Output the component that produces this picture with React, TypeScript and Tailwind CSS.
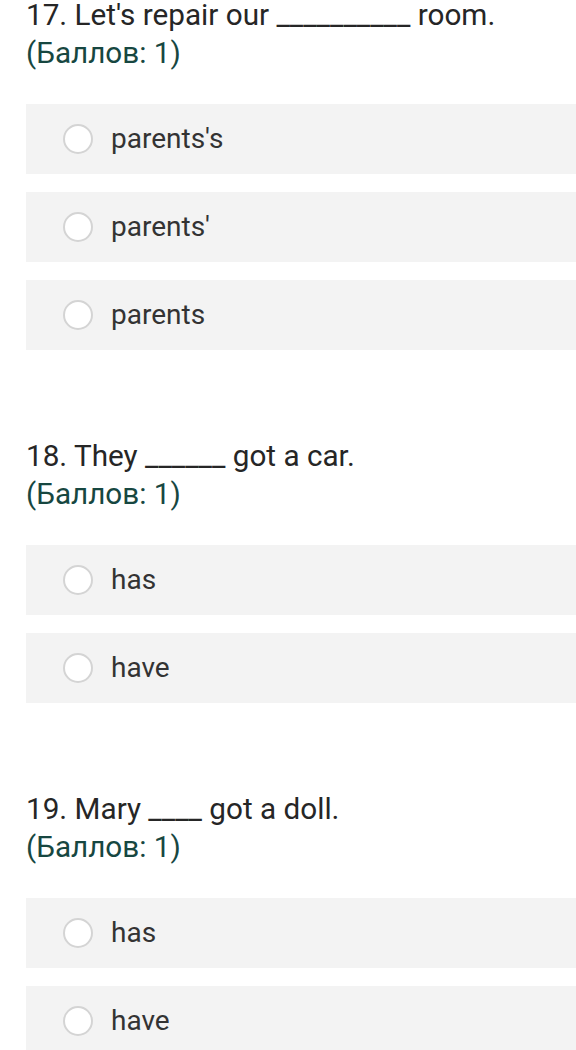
const questions = [
  { title: "17. Let's repair our __________ room.", options: ["parents's", "parents'", 'parents'] },
  { title: '18. They ______ got a car.', options: ['has', 'have'] },
  { title: '19. Mary ____ got a doll.', options: ['has', 'have'] },
]

export default function App() {
  return (
    <div className="min-h-screen overflow-hidden bg-white font-['Roboto',sans-serif]">
      <div className="-mt-[4px] pl-[26px] flex flex-col gap-[87px]">
        {questions.map((q) => (
          <div key={q.title}>
            <div className="text-[29.7px] leading-[38px]">
              <p className="text-[#262626]">{q.title}</p>
              <p className="text-[#174741]">(Баллов: 1)</p>
            </div>
            <div className="mt-[32px] flex flex-col gap-[18px]">
              {q.options.map((o) => (
                <div key={o} className="h-[70px] w-[560px] bg-[#f3f3f3] flex items-center">
                  <span className="ml-[37px] w-[30px] h-[30px] shrink-0 rounded-full border-2 border-[#d4d4d4] bg-white" />
                  <span className="ml-[18px] text-[28px] text-[#333]">{o}</span>
                </div>
              ))}
            </div>
          </div>
        ))}
      </div>
    </div>
  )
}
